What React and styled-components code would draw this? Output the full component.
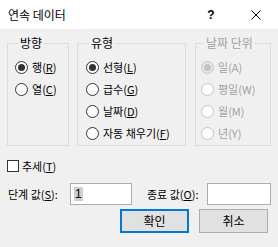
import React from "react";
import styled, { createGlobalStyle, css } from "styled-components";

const Global = createGlobalStyle`
  html, body { margin: 0; padding: 0; background: #f0f0f0; }
  * { box-sizing: border-box; }
`;

const FONT = `"Noto Sans CJK KR", "Noto Sans", sans-serif`;

const Dialog = styled.div`
  width: 278px;
  height: 247px;
  background: #f0f0f0;
  font-family: ${FONT};
  font-size: 11px;
  color: #000;
  overflow: hidden;
  display: flex;
  flex-direction: column;
`;

const TitleBar = styled.div`
  height: 29px;
  background: #fff;
  display: flex;
  align-items: center;
  padding-left: 8px;
  font-size: 12px;
`;

const Title = styled.div`
  flex: 1;
  line-height: 14px;
`;

const TitleButton = styled.div`
  width: ${(p) => p.$w}px;
  display: flex;
  justify-content: center;
  align-items: center;
  font-size: 12px;
  font-family: "Liberation Sans", sans-serif;
  font-weight: bold;
`;

const Body = styled.div`
  flex: 1;
  display: flex;
  flex-direction: column;
  padding: 6px 0 0 7px;
`;

const GroupsRow = styled.div`
  display: flex;
  align-items: flex-start;
`;

const Group = styled.fieldset`
  width: ${(p) => p.$w}px;
  height: 111px;
  margin: 0 ${(p) => p.$mr || 0}px 0 0;
  padding: 8px 0 0 ${(p) => p.$pl}px;
  border: 1px solid #dcdcdc;
  border-radius: 0;
  display: flex;
  flex-direction: column;
  gap: 6px;
  min-inline-size: 0;
`;

const Legend = styled.legend`
  padding: 0 2px;
  margin-left: 3px;
  font-size: 12px;
  line-height: 16px;
  color: ${(p) => (p.$disabled ? "#a0a0a0" : "#000")};
`;

const RadioRow = styled.div`
  display: flex;
  align-items: center;
  height: 16px;
  gap: 4px;
  line-height: 16px;
  color: ${(p) => (p.$disabled ? "#a0a0a0" : "#000")};
`;

const RadioCircle = styled.span`
  width: 13px;
  height: 13px;
  border-radius: 50%;
  flex: none;
  display: flex;
  align-items: center;
  justify-content: center;
  border: 1px solid #333;
  background: #fff;
  ${(p) =>
    p.$disabled &&
    css`
      border-color: #c4c4c4;
      background: ${p.$checked ? "#e6e6e6" : "#fff"};
    `}
  &::after {
    content: "";
    display: ${(p) => (p.$checked ? "block" : "none")};
    width: 7px;
    height: 7px;
    border-radius: 50%;
    background: ${(p) => (p.$disabled ? "#c4c4c4" : "#333")};
  }
`;

const Key = styled.span`
  text-decoration: ${(p) => (p.$plain ? "none" : "underline")};
  text-underline-offset: 1px;
`;

const CheckRow = styled.div`
  display: flex;
  align-items: center;
  gap: 3px;
  margin-top: 12px;
  height: 16px;
  line-height: 16px;
`;

const CheckBox = styled.span`
  width: 12px;
  height: 12px;
  border: 1px solid #333;
  background: #fff;
  flex: none;
`;

const FieldsRow = styled.div`
  display: flex;
  align-items: center;
  margin-top: 9px;
  height: 22px;
`;

const FieldLabel = styled.span`
  width: ${(p) => p.$w}px;
  padding-left: ${(p) => p.$pl || 1}px;
  line-height: 16px;
  white-space: nowrap;
`;

const Input = styled.div`
  width: ${(p) => p.$w}px;
  height: 22px;
  border: 1px solid #adadad;
  background: #fff;
  display: flex;
  align-items: center;
  padding-left: 3px;
  margin-right: ${(p) => p.$mr || 0}px;
`;

const Selected = styled.span`
  background: #cfcfcf;
  font-family: "Liberation Sans", sans-serif;
  font-size: 12px;
  line-height: 14px;
  padding: 0 1px;
`;

const ButtonsRow = styled.div`
  display: flex;
  justify-content: flex-end;
  gap: 10px;
  margin-top: 4px;
  padding-right: 10px;
`;

const Button = styled.div`
  width: 69px;
  height: 24px;
  background: #e1e1e1;
  border: ${(p) => (p.$default ? "2px solid #0078d7" : "1px solid #adadad")};
  display: flex;
  align-items: center;
  justify-content: center;
  font-size: 12px;
  line-height: 14px;
`;

function Radio({ label, k, checked, disabled }) {
  return (
    <RadioRow $disabled={disabled}>
      <RadioCircle $checked={checked} $disabled={disabled} />
      <span>
        {label}(<Key $plain={disabled}>{k}</Key>)
      </span>
    </RadioRow>
  );
}

export default function App() {
  return (
    <>
      <Global />
      <Dialog>
        <TitleBar>
          <Title>연속 데이터</Title>
          <TitleButton $w={46}>?</TitleButton>
          <TitleButton $w={44}>
            <svg width="10" height="10" viewBox="0 0 10 10">
              <path d="M0.5 0.5L9.5 9.5M9.5 0.5L0.5 9.5" stroke="#000" strokeWidth="1" />
            </svg>
          </TitleButton>
        </TitleBar>
        <Body>
          <GroupsRow>
            <Group $w={62} $pl={7} $mr={8}>
              <Legend>방향</Legend>
              <Radio label="행" k="R" checked />
              <Radio label="열" k="C" />
            </Group>
            <Group $w={109} $pl={8} $mr={9}>
              <Legend>유형</Legend>
              <Radio label="선형" k="L" checked />
              <Radio label="급수" k="G" />
              <Radio label="날짜" k="D" />
              <Radio label="자동 채우기" k="F" />
            </Group>
            <Group $w={76} $pl={5}>
              <Legend $disabled>날짜 단위</Legend>
              <Radio label="일" k="A" checked disabled />
              <Radio label="평일" k="W" disabled />
              <Radio label="월" k="M" disabled />
              <Radio label="년" k="Y" disabled />
            </Group>
          </GroupsRow>
          <CheckRow>
            <CheckBox />
            <span>
              추세(<Key>T</Key>)
            </span>
          </CheckRow>
          <FieldsRow>
            <FieldLabel $w={63}>
              단계 값(<Key>S</Key>):
            </FieldLabel>
            <Input $w={62} $mr={14}>
              <Selected>1</Selected>
            </Input>
            <FieldLabel $w={61}>
              종료 값(<Key>O</Key>):
            </FieldLabel>
            <Input $w={64} />
          </FieldsRow>
          <ButtonsRow>
            <Button $default>확인</Button>
            <Button>취소</Button>
          </ButtonsRow>
        </Body>
      </Dialog>
    </>
  );
}
